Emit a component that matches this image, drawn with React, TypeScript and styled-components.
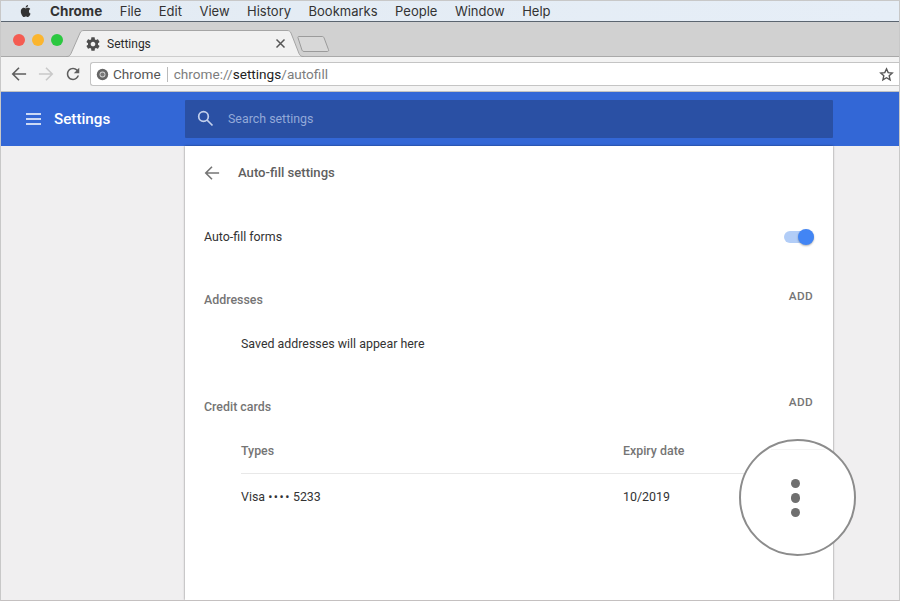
import styled, { createGlobalStyle } from "styled-components";
import { FC } from "react";

const GlobalStyle = createGlobalStyle`
    html, body {
        margin: 0;
        padding: 0;
        background: #fff;
    }
    * {
        box-sizing: border-box;
    }
`;

const Frame = styled.div`
    position: relative;
    width: 900px;
    height: 601px;
    overflow: hidden;
    display: flex;
    flex-direction: column;
    border: 1px solid #c8c8c8;
    border-bottom-color: #c4c0c0;
    font-family: Roboto, "Liberation Sans", sans-serif;
`;

const MenuBar = styled.div`
    height: 21px;
    flex: none;
    display: flex;
    align-items: center;
    padding-left: 18px;
    background: linear-gradient(90deg, #e3ebf3, #e6eef7);
    border-bottom: 1px solid #5b6570;
    font-family: Inter, "Liberation Sans", sans-serif;
    font-size: 13px;
    color: #333;
`;

const MenuItems = styled.div`
    display: flex;
    gap: 17.5px;
    margin-left: 17px;
`;

const MenuName = styled.span`
    font-size: 13.5px;
    font-weight: 700;
`;

const TabStrip = styled.div`
    height: 35px;
    flex: none;
    position: relative;
    display: flex;
    align-items: flex-end;
    background: #d1d1d1;
    border-bottom: 1px solid #a9a9a9;
`;

const Lights = styled.div`
    display: flex;
    gap: 7px;
    padding: 0 0 10px 12px;
`;

const Light = styled.span<{ color: string }>`
    width: 12px;
    height: 12px;
    border-radius: 50%;
    background: ${(props) => props.color};
`;

const Tab = styled.div`
    position: relative;
    width: 238px;
    height: 27px;
    margin-left: 3px;
    margin-bottom: -1px;
    display: flex;
    align-items: center;
    padding: 0 14px 0 19px;
    font-size: 12px;
    color: #2a2a2a;

    > svg.shape {
        position: absolute;
        left: 0;
        top: 0;
    }
`;

const TabIcon = styled.svg`
    position: relative;
    flex: none;
    margin-right: 6px;
`;

const TabTitle = styled.span`
    position: relative;
    flex: 1;
`;

const NewTab = styled.svg`
    flex: none;
    margin: 0 0 3px -7px;
`;

const Toolbar = styled.div`
    height: 35px;
    flex: none;
    display: flex;
    align-items: center;
    padding: 0 0 0 10px;
    background: #f3f3f3;
    border-bottom: 1px solid #c2c2c2;
`;

const NavButtons = styled.div`
    display: flex;
    align-items: center;
    gap: 11px;
    margin-right: 9px;
`;

const Omnibox = styled.div`
    flex: 1;
    height: 24px;
    display: flex;
    align-items: center;
    padding: 0 5px 0 5px;
    background: #fff;
    border: 1px solid #c4c4c4;
    border-right: none;
    border-radius: 3px 0 0 3px;
    font-size: 13.6px;
    color: #7d7d7d;
`;

const OriginChip = styled.span`
    margin-left: 4px;
    padding-right: 6px;
    margin-right: 6px;
    color: #555;
    line-height: 15px;
    border-right: 1px solid #bbb;
`;

const Host = styled.span`
    color: #222;
`;

const Address = styled.span`
    flex: 1;
`;

const SettingsHeader = styled.header`
    height: 54px;
    flex: none;
    display: flex;
    align-items: center;
    background: #3367d6;
    color: #fff;
`;

const HeaderTitle = styled.div`
    width: 184px;
    flex: none;
    display: flex;
    align-items: center;
    padding-left: 25px;
    font-size: 15.2px;
    font-weight: 500;
    gap: 13px;
`;

const SearchBox = styled.div`
    width: 648px;
    height: 38px;
    display: flex;
    align-items: center;
    gap: 14px;
    padding: 0 0 1px 12px;
    background: #2a50a4;
    border-radius: 1px;
    font-size: 12.4px;
    color: #93a9d8;
`;

const Body = styled.div`
    flex: 1;
    display: flex;
    justify-content: flex-start;
    background: #f0eff0;
    padding-left: 184px;
`;

const Card = styled.main`
    width: 648px;
    padding: 0 19px;
    background: #fff;
    box-shadow: 0 0 2px rgba(0, 0, 0, 0.5);
    color: #333;
    font-size: 12.4px;
`;

const PageTitle = styled.div`
    height: 53px;
    display: flex;
    align-items: center;
    gap: 18px;
    font-size: 13.1px;
    font-weight: 500;
    color: #5f5f5f;
`;

const ToggleRow = styled.div`
    height: 32px;
    margin-top: 21px;
    display: flex;
    align-items: center;
    justify-content: space-between;
`;

const ToggleTrack = styled.span`
    position: relative;
    width: 30px;
    height: 12px;
    margin-top: 1px;
    border-radius: 6px;
    background: #b2cdf7;
`;

const ToggleKnob = styled.span`
    position: absolute;
    right: 0;
    top: -2px;
    width: 16px;
    height: 16px;
    border-radius: 50%;
    background: #4285f4;
    box-shadow: 0 1px 2px rgba(0, 0, 0, 0.3);
`;

const SectionHead = styled.div<{ top: number }>`
    display: flex;
    justify-content: space-between;
    align-items: flex-start;
    margin-top: ${(props) => props.top}px;
    height: 20px;
`;

const SectionName = styled.span`
    padding-top: 4px;
    font-weight: 500;
    color: #757575;
`;

const AddLink = styled.span<{ drop?: number }>`
    margin: ${(props) => props.drop ?? 0}px 1px 0 0;
    font-size: 11.8px;
    font-weight: 500;
    letter-spacing: 0.3px;
    color: #757575;
`;

const EmptyNote = styled.div`
    margin: 28px 0 0 37px;
    height: 16px;
    line-height: 16px;
`;

const CardTable = styled.div`
    margin: 24px 0 0 37px;
`;

const TableRow = styled.div<{ head?: boolean }>`
    display: grid;
    grid-template-columns: 382px 1fr;
    align-items: center;
    height: ${(props) => (props.head ? "35px" : "45px")};
    padding-bottom: ${(props) => (props.head ? "12px" : "0")};
    font-weight: ${(props) => (props.head ? 500 : 400)};
    color: ${(props) => (props.head ? "#757575" : "#333")};
    border-bottom: ${(props) => (props.head ? "1px solid #e8e8e8" : "none")};
`;

const CardDots = styled.span`
    letter-spacing: 1.5px;
    margin-right: -1px;
`;

const Magnifier = styled.div`
    position: absolute;
    left: 738px;
    top: 438px;
    width: 117px;
    height: 117px;
    display: flex;
    flex-direction: column;
    align-items: center;
    justify-content: center;
    gap: 5px;
    padding: 1px 4px 0 0;
    background: #fff;
    border: 2px solid #8c8c8c;
    border-radius: 50%;
`;

const MagnifierRule = styled.span`
    position: absolute;
    left: 30px;
    top: 8px;
    width: 54px;
    height: 1px;
    background: #f4f4f4;
`;

const Dot = styled.span`
    width: 9.5px;
    height: 9.5px;
    border-radius: 50%;
    background: #6f6f6f;
`;

const AppleLogo = () => (
    <svg width="14" height="16" viewBox="0 0 24 24" fill="#333">
        <path d="M17.05 12.54c-.03-2.6 2.13-3.85 2.22-3.91-1.21-1.77-3.09-2.01-3.76-2.04-1.6-.16-3.12.94-3.93.94-.81 0-2.06-.92-3.39-.89-1.74.03-3.35 1.01-4.25 2.57-1.81 3.14-.46 7.8 1.3 10.35.86 1.25 1.89 2.65 3.24 2.6 1.3-.05 1.79-.84 3.36-.84 1.57 0 2.01.84 3.39.81 1.4-.02 2.28-1.27 3.14-2.53.99-1.45 1.4-2.85 1.42-2.93-.03-.01-2.71-1.04-2.74-4.13zM14.47 4.9c.72-.87 1.2-2.08 1.07-3.28-1.03.04-2.28.69-3.02 1.55-.66.77-1.24 2-1.09 3.18 1.15.09 2.33-.59 3.04-1.45z" />
    </svg>
);

const GearIcon = () => (
    <TabIcon width="16" height="16" viewBox="0 0 24 24" fill="#4d4d4d">
        <path d="M19.43 12.98c.04-.32.07-.64.07-.98s-.03-.66-.07-.98l2.11-1.65c.19-.15.24-.42.12-.64l-2-3.46c-.12-.22-.39-.3-.61-.22l-2.49 1c-.52-.4-1.08-.73-1.69-.98l-.38-2.65C14.46 2.18 14.25 2 14 2h-4c-.25 0-.46.18-.49.42l-.38 2.65c-.61.25-1.17.59-1.69.98l-2.49-1c-.23-.09-.49 0-.61.22l-2 3.46c-.13.22-.07.49.12.64l2.11 1.65c-.04.32-.07.65-.07.98s.03.66.07.98l-2.11 1.65c-.19.15-.24.42-.12.64l2 3.46c.12.22.39.3.61.22l2.49-1c.52.4 1.08.73 1.69.98l.38 2.65c.03.24.24.42.49.42h4c.25 0 .46-.18.49-.42l.38-2.65c.61-.25 1.17-.59 1.69-.98l2.49 1c.23.09.49 0 .61-.22l2-3.46c.12-.22.07-.49-.12-.64l-2.11-1.65zM12 15.5c-1.93 0-3.5-1.57-3.5-3.5s1.57-3.5 3.5-3.5 3.5 1.57 3.5 3.5-1.57 3.5-3.5 3.5z" />
    </TabIcon>
);

const Arrow: FC<{ color: string; flip?: boolean; size?: number }> = ({ color, flip, size = 16 }) => (
    <svg
        width={size}
        height={size}
        viewBox="0 0 18 18"
        fill="none"
        stroke={color}
        strokeWidth="1.8"
        style={flip ? { transform: "scaleX(-1)" } : undefined}
    >
        <path d="M17 9H2M9 2L2 9l7 7" />
    </svg>
);

const Reload = () => (
    <svg width="16" height="16" viewBox="0 0 24 24" fill="#5e5e5e">
        <path d="M17.65 6.35A7.96 7.96 0 0 0 12 4C7.58 4 4 7.58 4 12s3.58 8 8 8c3.73 0 6.84-2.55 7.73-6h-2.08A5.99 5.99 0 0 1 12 18c-3.31 0-6-2.69-6-6s2.69-6 6-6c1.66 0 3.14.69 4.22 1.78L13 11h7V4l-2.35 2.35z" transform="translate(-2 -2) scale(1.17)" />
    </svg>
);

const ChromeMark = () => (
    <svg width="13" height="13" viewBox="0 0 16 16" style={{ flex: "none" }}>
        <circle cx="8" cy="8" r="7" fill="#666" />
        <circle cx="8" cy="8" r="3.6" fill="#d8d8d8" />
        <circle cx="8" cy="8" r="2.6" fill="#777" />
    </svg>
);

const Star = () => (
    <svg width="15" height="15" viewBox="0 0 24 24" fill="none" stroke="#555" strokeWidth="2.2" style={{ flex: "none" }}>
        <path d="M12 3l2.7 6 6.5.7-4.9 4.3 1.4 6.4L12 17.1l-5.7 3.3 1.4-6.4-4.9-4.3 6.5-.7z" />
    </svg>
);

const Burger = () => (
    <svg width="15" height="12" viewBox="0 0 15 12" stroke="#fff" strokeWidth="1.6">
        <path d="M0 1h15M0 6h15M0 11h15" />
    </svg>
);

const SearchIcon = () => (
    <svg width="17" height="17" viewBox="0 0 17 17" fill="none" stroke="#c3d0ec" strokeWidth="1.7">
        <circle cx="6.5" cy="6.5" r="4.8" />
        <path d="M10 10l5.5 5.5" />
    </svg>
);

const menus = ["File", "Edit", "View", "History", "Bookmarks", "People", "Window", "Help"];

const App = () => (
    <>
        <GlobalStyle />
        <Frame>
            <MenuBar>
                <AppleLogo />
                <MenuItems>
                    <MenuName>Chrome</MenuName>
                    {menus.map((m) => (
                        <span key={m}>{m}</span>
                    ))}
                </MenuItems>
            </MenuBar>
            <TabStrip>
                <Lights>
                    <Light color="#f45c52" />
                    <Light color="#fbb52e" />
                    <Light color="#2bc840" />
                </Lights>
                <Tab>
                    <svg className="shape" width="238" height="27" viewBox="0 0 238 27">
                        <path
                            d="M0 26.5h1c2 0 3-1 4-3L14 3c1-2 2-2.5 4-2.5h203c2 0 3 .5 4 2.5l8 20.5c1 2 2 3 4 3h1"
                            fill="#f1f1f1"
                            stroke="#a5a5a5"
                        />
                    </svg>
                    <GearIcon />
                    <TabTitle>Settings</TabTitle>
                    <svg width="11" height="11" viewBox="0 0 11 11" stroke="#555" strokeWidth="1.5" style={{ position: "relative", marginRight: "4px" }}>
                        <path d="M1.5 1.5l8 8M9.5 1.5l-8 8" />
                    </svg>
                </Tab>
                <NewTab width="33" height="18" viewBox="0 0 33 18">
                    <path d="M2 1.5h23c1 0 1.5.3 2 1.2l4.5 12c.4 1 0 1.8-1.2 1.8H7c-1 0-1.5-.4-2-1.3L1 2.8c-.3-.8 0-1.3 1-1.3z" fill="#d8d8d8" stroke="#9b9b9b" />
                </NewTab>
            </TabStrip>
            <Toolbar>
                <NavButtons>
                    <Arrow color="#5e5e5e" />
                    <Arrow color="#c9c9c9" flip />
                    <Reload />
                </NavButtons>
                <Omnibox>
                    <ChromeMark />
                    <OriginChip>Chrome</OriginChip>
                    <Address>
                        chrome://<Host>settings</Host>/autofill
                    </Address>
                    <Star />
                </Omnibox>
            </Toolbar>
            <SettingsHeader>
                <HeaderTitle>
                    <Burger />
                    Settings
                </HeaderTitle>
                <SearchBox>
                    <SearchIcon />
                    Search settings
                </SearchBox>
            </SettingsHeader>
            <Body>
                <Card>
                    <PageTitle>
                        <Arrow color="#757575" />
                        Auto-fill settings
                    </PageTitle>
                    <ToggleRow>
                        Auto-fill forms
                        <ToggleTrack>
                            <ToggleKnob />
                        </ToggleTrack>
                    </ToggleRow>
                    <SectionHead top={36}>
                        <SectionName>Addresses</SectionName>
                        <AddLink drop={1}>ADD</AddLink>
                    </SectionHead>
                    <EmptyNote>Saved addresses will appear here</EmptyNote>
                    <SectionHead top={43}>
                        <SectionName>Credit cards</SectionName>
                        <AddLink>ADD</AddLink>
                    </SectionHead>
                    <CardTable>
                        <TableRow head>
                            <span>Types</span>
                            <span>Expiry date</span>
                        </TableRow>
                        <TableRow>
                            <span>
                                Visa <CardDots>••••</CardDots> 5233
                            </span>
                            <span>10/2019</span>
                        </TableRow>
                    </CardTable>
                </Card>
            </Body>
            <Magnifier>
                <MagnifierRule />
                <Dot />
                <Dot />
                <Dot />
            </Magnifier>
        </Frame>
    </>
);

export default App;
